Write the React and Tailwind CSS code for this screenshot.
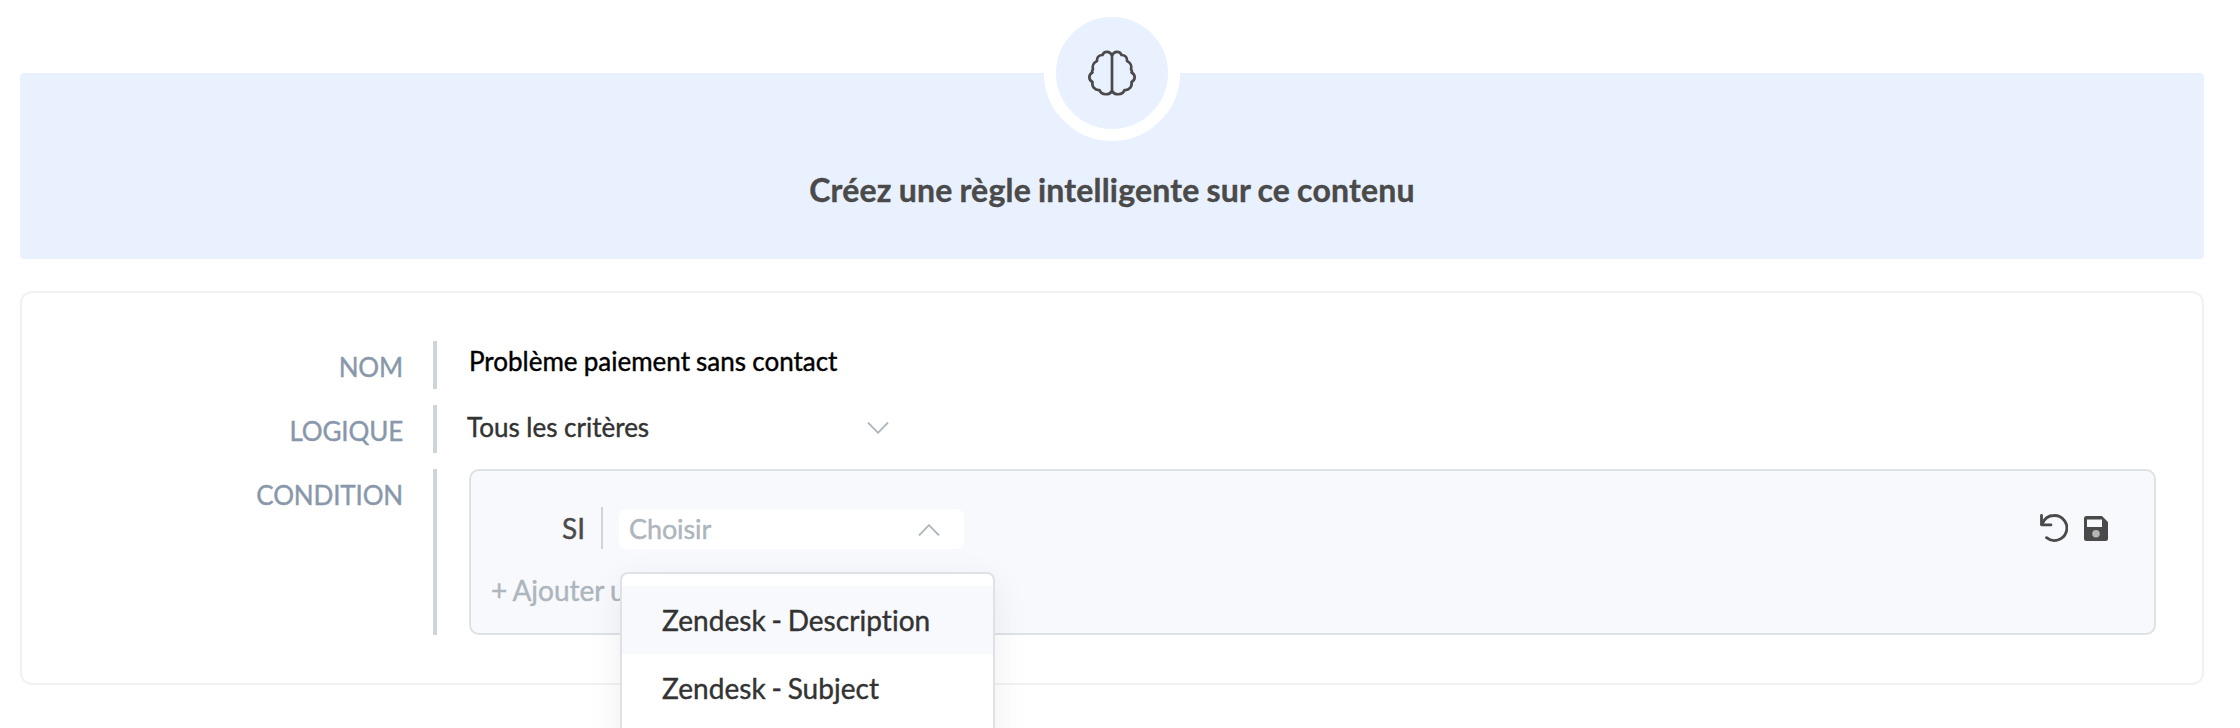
import React, { useState } from "react";

const OPTIONS = ["Zendesk - Description", "Zendesk - Subject"];

function BrainIcon() {
  return (
    <svg width="48" height="48" viewBox="0 0 48 48" fill="none" stroke="#4a4a4a" strokeWidth="2.7" strokeLinejoin="round">
      <path d="M24 6.500 C22 1.800 16 1.800 14.500 6 C11 6 8.500 8.500 9 12 C5.500 13.500 4 17 5 20.500 C3.500 21.500 4 22.500 4.500 23.500 C0.300 25.500 0.300 31 4.500 33 C3.500 37.500 7 41.500 11.500 41 C13.500 46.500 21.500 46.500 24 42" />
      <path d="M24 6.500 C26 1.800 32 1.800 33.500 6 C37 6 39.500 8.500 39 12 C42.500 13.500 44 17 43 20.500 C44.500 21.500 44 22.500 43.500 23.500 C47.700 25.500 47.700 31 43.500 33 C44.500 37.500 41 41.500 36.500 41 C34.500 46.500 26.500 46.500 24 42" />
      <path d="M24 6V42" />
    </svg>
  );
}

function Chevron({ up }) {
  return (
    <svg className="relative top-px" width="22" height="12" viewBox="0 0 22 12" fill="none" stroke="#adb5bd" strokeWidth="1.8">
      <path d={up ? "M1 11.500 11 1.200 21 11.500" : "M1 0.500 11 10.800 21 0.500"} />
    </svg>
  );
}

function UndoIcon() {
  return (
    <svg width="28" height="28" viewBox="0 0 28 28" fill="none" stroke="#4a4a4a" strokeWidth="2.8" strokeLinecap="round" strokeLinejoin="round">
      <path d="M1.500 1.500V10.800H11" />
      <path d="M2 10.300C4 5 8.500 1.500 14 1.500A12.500 12.500 0 1 1 6.500 23.700" />
    </svg>
  );
}

function SaveIcon() {
  return (
    <svg width="24" height="25" viewBox="0 0 24 25">
      <path fill="#4a4a4a" fillRule="evenodd" d="M2.500 0H18L24 6V22.500Q24 25 21.500 25H2.500Q0 25 0 22.500V2.500Q0 0 2.500 0ZM3 3.500V11H18V3.500Z" />
      <circle cx="12" cy="17.700" r="3.800" fill="#b5b5b5" />
    </svg>
  );
}

function Row({ label, children, className }) {
  return (
    <div className={`flex ${className}`}>
      <div className="w-[381px] shrink-0 text-right text-[26px] leading-[53px] tracking-[-0.15px] text-[#8898aa]">{label}</div>
      <div className="ml-[30px] w-1 shrink-0 bg-[#ced4da]" />
      {children}
    </div>
  );
}

export default function App() {
  const [selected, setSelected] = useState(0);

  return (
    <div className="h-[728px] w-[2240px] overflow-hidden bg-white pt-[73px] pr-9 pl-5 font-['Lato',sans-serif] [font-variant-ligatures:none] [-webkit-text-stroke:0.4px]">
      <header className="relative h-[186px] rounded bg-[#eaf1fe] pt-[97px]">
        <div className="absolute top-[-68px] left-1/2 flex h-[136px] w-[136px] -translate-x-1/2 items-center justify-center rounded-full border-12 border-white bg-[#eaf1fe]">
          <BrainIcon />
        </div>
        <h1 className="text-center text-[32px] leading-10 font-bold tracking-[0.2px] text-[#4a4a4a] [word-spacing:-1px]">
          Créez une règle intelligente sur ce contenu
        </h1>
      </header>

      <section className="mt-8 flex h-[394px] flex-col gap-4 rounded-xl border-2 border-[#f1f1f1] pt-12 pr-[46px]">
        <Row label="NOM" className="h-12">
          <span className="ml-8 text-[26px] leading-10 text-black [word-spacing:-0.5px]">Problème paiement sans contact</span>
        </Row>

        <Row label="LOGIQUE" className="h-12">
          <div className="ml-[30px] flex h-11 w-[422px] items-center justify-between">
            <span className="text-[26px] leading-[44px] text-[#333]">Tous les critères</span>
            <Chevron />
          </div>
        </Row>

        <Row label="CONDITION" className="h-[166px]">
          <div className="ml-8 flex-1 rounded-[10px] border-2 border-[#dee2e6] bg-[#f8f9fd] pt-9 pr-[46px] pl-[20px] text-[28px]">
            <div className="flex h-[42px]">
              <div className="w-[94px] text-right leading-[42px] text-[#4a4a4a]">SI</div>
              <div className="ml-[16px] w-0.5 bg-[#ced4da]" />
              <div className="relative mt-0.5 ml-4 flex h-10 w-[345px] items-center justify-between rounded-lg bg-white pr-6 pl-[10px]">
                <span className="text-[27px] leading-10 tracking-[-0.1px] text-[#adb5bd]">Choisir</span>
                <Chevron up />
                <ul className="absolute top-[63px] left-px z-10 h-[240px] w-[375px] rounded-lg border-2 border-[#dee2e6] bg-white py-3 shadow-[0_10px_36px_rgba(0,0,0,0.07)]">
                  {OPTIONS.map((option, i) => (
                    <li
                      key={option}
                      onClick={() => setSelected(i)}
                      className={`h-[68px] cursor-pointer pl-10 leading-[68px] tracking-[0.05px] text-[#333] [word-spacing:-1.5px] ${selected === i ? "bg-[#f8f9fd]" : ""}`}
                    >
                      {option}
                    </li>
                  ))}
                </ul>
              </div>
              <div className="ml-auto flex h-[42px] items-center gap-4">
                <UndoIcon />
                <SaveIcon />
              </div>
            </div>
            <div className="mt-[21px] leading-10 text-[#adb5bd] [word-spacing:-1px]">+ Ajouter une condition</div>
          </div>
        </Row>
      </section>
    </div>
  );
}
